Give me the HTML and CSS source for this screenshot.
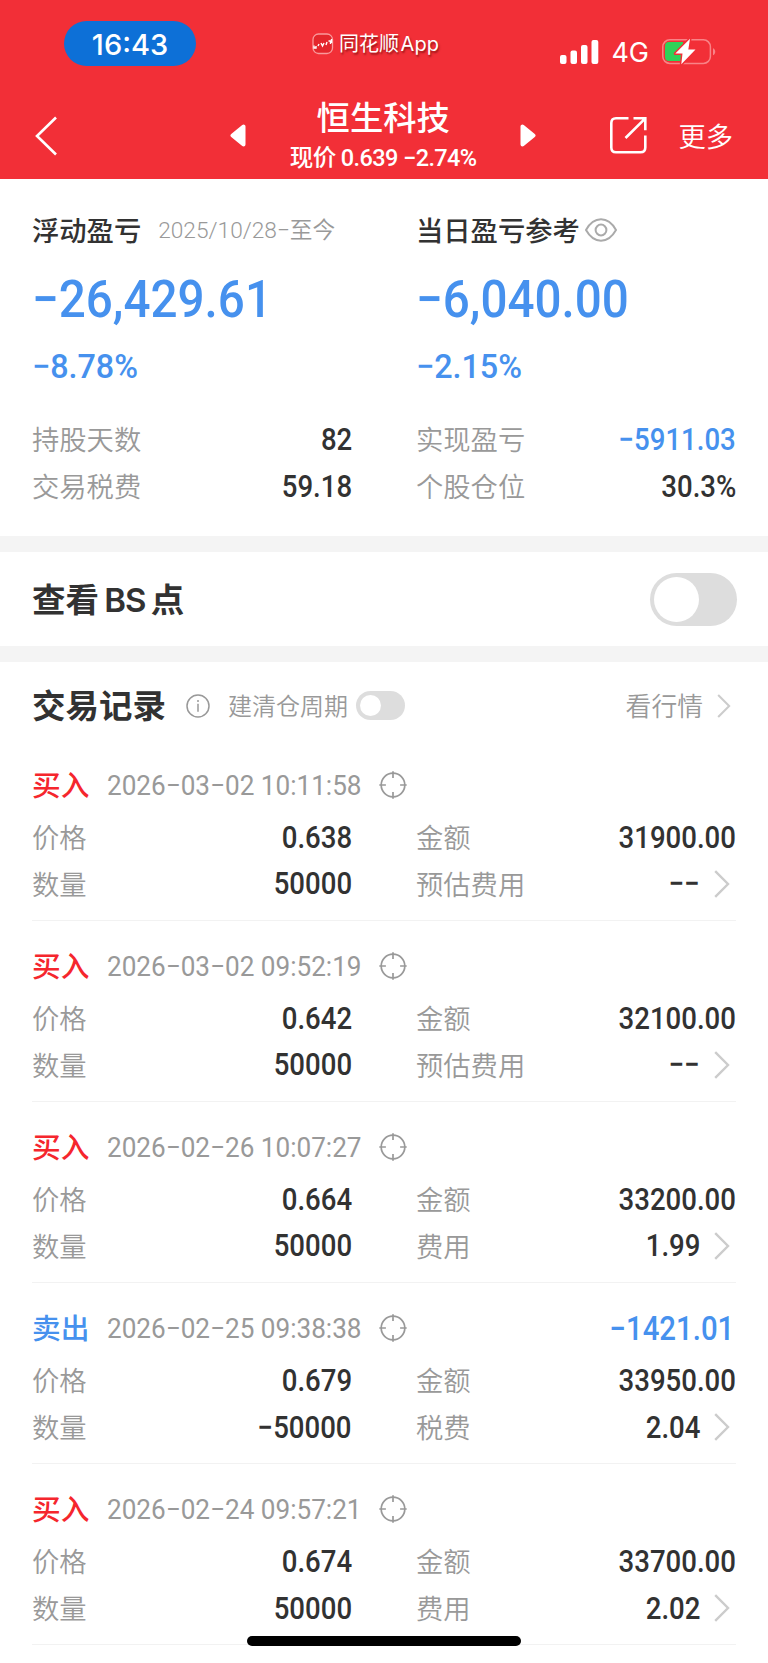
FILE: index.html
```html
<!DOCTYPE html>
<html lang="zh-CN">
<head>
  <meta charset="UTF-8" />
  <meta name="viewport" content="width=device-width, initial-scale=1" />
  <title>恒生科技</title>
  <link rel="stylesheet" href="styles.css">
</head>
<body>
  <svg class="sprite" width="0" height="0">
    <symbol id="target" viewBox="0 0 28 28">
      <circle cx="14" cy="14" r="11.8" />
      <path d="M14 0.3v6.6M14 21.1v6.6M0.3 14h6.6M21.1 14h6.6" />
    </symbol>
    <symbol id="arrow" viewBox="0 0 16 28">
      <path d="M1.2 1.2L14 14L1.2 26.8" />
    </symbol>
  </svg>

  <header class="header">
    <div class="status">
      <div class="time">16:43</div>
      <div class="app">
        <svg width="22" height="22" viewBox="0 0 22 22" fill="none">
          <rect x="1" y="1" width="19.5" height="19.5" rx="5.5" fill="#e4262c" stroke="#f9999b" stroke-width="1.3" />
          <path d="M2 12.5v2.5h2v-2M6 13l1-2M9 10l1.5 3 1.5-3M14 12l1-3M16.5 8h2v3M19.5 6v4" stroke="#fff" stroke-width="1.4" />
        </svg>
        <span>同花顺 App</span>
      </div>
      <div class="network">
        <svg width="39" height="24" viewBox="0 0 39 24" fill="#fff">
          <rect x="0" y="15" width="6.5" height="9" rx="2" />
          <rect x="10.5" y="10.5" width="6.5" height="13.5" rx="2" />
          <rect x="21" y="5" width="6.5" height="19" rx="2" />
          <rect x="31.5" y="0" width="6.8" height="24" rx="2" />
        </svg>
        <span>4G</span>
        <svg width="54" height="28" viewBox="0 0 54 28">
          <rect x="0.8" y="1.8" width="47.6" height="23.6" rx="7" fill="none" stroke="#f98387" stroke-width="1.5" />
          <path d="M51 10.3c3 1.3 3 5.7 0 7z" fill="#f98387" />
          <path d="M7 4h14v19H7q-4 0-4-4V8q0-4 4-4z" fill="#30d158" />
          <path d="M28 0.8L13.3 15.6h7.2L19.3 26.2L33.5 11.4h-7.2z" fill="#fff" stroke="#f22f37" stroke-width="3" stroke-linejoin="round" paint-order="stroke" />
        </svg>
      </div>
    </div>

    <nav class="nav">
      <svg class="back" width="23" height="40" viewBox="0 0 23 40"><path d="M21 1.5L2 20L21 38.5" /></svg>
      <svg class="prev" width="16" height="23" viewBox="0 0 16 23"><path d="M13.5 2.5v18L2.5 11.5z" /></svg>
      <div class="stock">
        <h1>恒生科技</h1>
        <p>现价 0.639 −2.74%</p>
      </div>
      <svg class="next" width="16" height="23" viewBox="0 0 16 23"><path d="M2.5 2.5v18L13.5 11.5z" /></svg>
      <svg class="share" width="37" height="37" viewBox="0 0 37 37">
        <path d="M18.5 1.3H6Q1.3 1.3 1.3 6v24.5q0 4.8 4.7 4.8h24.5q4.8 0 4.8-4.8V18.5" />
        <path d="M23.5 1.3h11.8v12M35.3 1.3L15.5 21" />
      </svg>
      <span class="more">更多</span>
    </nav>
  </header>

  <section class="summary">
    <div class="col">
      <div class="col-title">浮动盈亏 <span class="range">2025/10/28−至今</span></div>
      <div class="amount">−26,429.61</div>
      <div class="percent">−8.78%</div>
      <div class="row"><span>持股天数</span><b>82</b></div>
      <div class="row"><span>交易税费</span><b>59.18</b></div>
    </div>
    <div class="col">
      <div class="col-title">当日盈亏参考
        <svg class="eye" width="32" height="24" viewBox="0 0 32 24">
          <path d="M1 12Q7 1.3 16 1.3T31 12Q25 22.7 16 22.7T1 12z" />
          <circle cx="16" cy="12" r="5.4" />
        </svg>
      </div>
      <div class="amount">−6,040.00</div>
      <div class="percent">−2.15%</div>
      <div class="row"><span>实现盈亏</span><b class="blue">−5911.03</b></div>
      <div class="row"><span>个股仓位</span><b>30.3%</b></div>
    </div>
  </section>

  <section class="bs">
    <h2>查看 <span>BS</span> 点</h2>
    <div class="switch"></div>
  </section>

  <section class="records">
    <div class="records-head">
      <h2>交易记录</h2>
      <svg class="info" width="24" height="24" viewBox="0 0 24 24">
        <circle cx="12" cy="12" r="11" />
        <path d="M12 9.8v8M12 6v2" />
      </svg>
      <span class="cycle">建清仓周期</span>
      <div class="switch small"></div>
      <span class="quote">看行情</span>
      <svg class="arrow quote-arrow"><use href="#arrow" /></svg>
    </div>

    <div class="record">
      <div class="record-head">
        <span class="tag">买入</span><span class="date">2026−03−02 10:11:58</span>
        <svg class="target"><use href="#target" /></svg>
      </div>
      <div class="grid">
        <div class="row"><span>价格</span><b>0.638</b></div>
        <div class="row"><span>金额</span><b>31900.00</b></div>
        <div class="row"><span>数量</span><b>50000</b></div>
        <div class="row"><span>预估费用</span><b>−−</b><svg class="arrow"><use href="#arrow" /></svg></div>
      </div>
    </div>

    <div class="record">
      <div class="record-head">
        <span class="tag">买入</span><span class="date">2026−03−02 09:52:19</span>
        <svg class="target"><use href="#target" /></svg>
      </div>
      <div class="grid">
        <div class="row"><span>价格</span><b>0.642</b></div>
        <div class="row"><span>金额</span><b>32100.00</b></div>
        <div class="row"><span>数量</span><b>50000</b></div>
        <div class="row"><span>预估费用</span><b>−−</b><svg class="arrow"><use href="#arrow" /></svg></div>
      </div>
    </div>

    <div class="record">
      <div class="record-head">
        <span class="tag">买入</span><span class="date">2026−02−26 10:07:27</span>
        <svg class="target"><use href="#target" /></svg>
      </div>
      <div class="grid">
        <div class="row"><span>价格</span><b>0.664</b></div>
        <div class="row"><span>金额</span><b>33200.00</b></div>
        <div class="row"><span>数量</span><b>50000</b></div>
        <div class="row"><span>费用</span><b>1.99</b><svg class="arrow"><use href="#arrow" /></svg></div>
      </div>
    </div>

    <div class="record">
      <div class="record-head">
        <span class="tag sell">卖出</span><span class="date">2026−02−25 09:38:38</span>
        <svg class="target"><use href="#target" /></svg>
        <span class="profit">−1421.01</span>
      </div>
      <div class="grid">
        <div class="row"><span>价格</span><b>0.679</b></div>
        <div class="row"><span>金额</span><b>33950.00</b></div>
        <div class="row"><span>数量</span><b>−50000</b></div>
        <div class="row"><span>税费</span><b>2.04</b><svg class="arrow"><use href="#arrow" /></svg></div>
      </div>
    </div>

    <div class="record">
      <div class="record-head">
        <span class="tag">买入</span><span class="date">2026−02−24 09:57:21</span>
        <svg class="target"><use href="#target" /></svg>
      </div>
      <div class="grid">
        <div class="row"><span>价格</span><b>0.674</b></div>
        <div class="row"><span>金额</span><b>33700.00</b></div>
        <div class="row"><span>数量</span><b>50000</b></div>
        <div class="row"><span>费用</span><b>2.02</b><svg class="arrow"><use href="#arrow" /></svg></div>
      </div>
    </div>
  </section>

  <div class="home-bar"></div>
</body>
</html>
```
FILE: styles.css
```css
* {
  box-sizing: border-box;
}
body {
  margin: 0;
  position: relative;
  height: 1663px;
  overflow: hidden;
  background: #fff;
  color: #323232;
  font-family: Roboto, "Noto Sans CJK SC", sans-serif;
}
h1, h2, p {
  margin: 0;
}
svg {
  flex: none;
  display: block;
}
.sprite {
  position: absolute;
}

/* header */
.header {
  height: 179px;
  background: #f22f37;
  color: #fff;
}
.status {
  display: flex;
  height: 92px;
  padding: 21px 52px 0 64px;
}
.time {
  width: 132px;
  height: 45px;
  border-radius: 23px;
  background: #0d70d7;
  font: 450 29px/47px Inter, sans-serif;
  text-align: center;
}
.app {
  display: flex;
  align-items: center;
  gap: 5px;
  height: 45px;
  margin-left: 116px;
  font: 400 20px/47px Inter, "Noto Sans CJK SC", sans-serif;
  word-spacing: -4px;
  text-shadow: 1px 2px 2px rgba(90, 0, 0, .6);
}
.app span {
  padding-top: 2px;
}
.network {
  display: flex;
  align-items: center;
  height: 61px;
  margin-left: auto;
  font: 400 27px/63px Inter, sans-serif;
}
.network span {
  margin: 2px 13px 0 12px;
}
.nav {
  display: flex;
  align-items: center;
  height: 87px;
  padding: 0 35px;
}
.nav svg {
  fill: none;
  stroke: #fff;
  stroke-width: 2.6;
}
.nav .prev,
.nav .next {
  fill: #fff;
  stroke-width: 4;
  stroke-linejoin: round;
}
.prev {
  margin-left: 172px;
}
.stock {
  width: 276px;
  margin: 2px 0 0 1px;
  text-align: center;
}
.stock h1 {
  font-size: 33.3px;
  font-weight: 500;
  line-height: 44px;
}
.stock p {
  font-size: 23.5px;
  font-weight: 500;
  line-height: 35px;
  letter-spacing: -.6px;
}
.next {
  margin-left: 1px;
}
.share {
  margin-left: 74px;
}
.more {
  margin: -2px 0 0 31px;
  font-size: 27.3px;
  font-weight: 350;
  white-space: nowrap;
}

/* summary */
.summary {
  display: grid;
  grid-template-columns: 320px 320px;
  gap: 64px;
  height: 357px;
  padding: 30px 32px 0;
}
.col-title {
  display: flex;
  align-items: center;
  height: 40px;
  font-size: 27.3px;
  font-weight: 500;
  white-space: nowrap;
}
.range {
  margin-left: 17px;
  padding-bottom: 1px;
  color: #999;
  font-size: 22.7px;
  font-weight: 350;
}
.eye {
  margin: 1px 0 0 5px;
  fill: none;
  stroke: #aaa;
  stroke-width: 2;
}
/* narrow figures */
.amount,
.percent,
.date,
.profit,
.row b {
  transform: scaleX(.89);
  transform-origin: right;
}
.amount {
  height: 60px;
  margin-top: 21px;
  color: #4691ee;
  font-size: 52px;
  font-weight: 500;
  line-height: 60px;
  transform: scaleX(.915);
  transform-origin: left;
}
.percent {
  height: 40px;
  margin: 16px 0 30px;
  color: #4691ee;
  font-size: 34px;
  font-weight: 500;
  line-height: 40px;
  transform: scaleX(.95);
  transform-origin: left;
}
.row {
  display: flex;
  align-items: center;
  height: 46.7px;
  color: #999;
  font-size: 27.3px;
  font-weight: 350;
}
.row span {
  padding-bottom: 2px;
}
.row b {
  margin-left: auto;
  color: #323232;
  font-size: 31px;
  font-weight: 500;
}
.row .blue {
  color: #4691ee;
}

/* switches */
.bs {
  display: flex;
  align-items: center;
  justify-content: space-between;
  height: 126px;
  padding: 0 31px 0 32px;
  border: solid #f4f4f4;
  border-width: 16px 0;
}
h2 {
  padding-top: 2px;
  font-size: 33.5px;
  font-weight: 700;
  line-height: 44px;
}
.bs h2 {
  word-spacing: -3px;
}
.bs span {
  font-family: Inter, sans-serif;
  font-size: 33px;
  font-weight: 600;
  letter-spacing: -1px;
}
.switch {
  width: 87px;
  height: 53px;
  padding: 4px;
  border-radius: 27px;
  background: #ddd;
}
.switch::before {
  content: "";
  display: block;
  width: 45px;
  height: 45px;
  border-radius: 50%;
  background: #fff;
}
.small {
  width: 49px;
  height: 29px;
}
.small::before {
  width: 21px;
  height: 21px;
}

/* records */
.records {
  padding: 0 32px;
}
.records-head {
  display: flex;
  align-items: center;
  height: 78px;
  padding-top: 9px;
  color: #999;
  font-weight: 350;
}
.records-head h2 {
  color: #323232;
}
.info {
  margin: 0 18px 0 20px;
  fill: none;
  stroke: #999;
  stroke-width: 1.5;
}
.cycle {
  margin-right: 8px;
  padding-bottom: 2px;
  font-size: 24px;
}
.quote {
  margin-left: auto;
  padding-bottom: 2px;
  font-size: 25.8px;
}
.record {
  height: 181.1px;
  padding-top: 25px;
  border-bottom: 1px solid #f2f2f2;
}
.record-head {
  display: flex;
  align-items: center;
  height: 40px;
}
.tag {
  width: 75px;
  padding-bottom: 3px;
  color: #f5262d;
  font-size: 28.7px;
  font-weight: 500;
}
.sell {
  color: #4691ee;
}
.date {
  width: 272px;
  color: #999;
  font-size: 28px;
  white-space: nowrap;
  transform: scaleX(.933);
  transform-origin: left;
}
.target {
  width: 28px;
  height: 28px;
  fill: none;
  stroke: #999;
  stroke-width: 1.7;
}
.profit {
  margin: 0 2px 0 auto;
  color: #4691ee;
  font-size: 33px;
  font-weight: 500;
}
.grid {
  display: grid;
  grid-template-columns: 320px 320px;
  column-gap: 64px;
  margin-top: 8.7px;
}
.arrow {
  width: 16px;
  height: 28px;
  margin: 0 6px 0 14px;
  fill: none;
  stroke: #ccc;
  stroke-width: 2.4;
}
.quote-arrow {
  width: 14px;
  height: 24px;
  margin: 0 5px 0 14px;
}

.home-bar {
  position: absolute;
  left: 247px;
  top: 1636px;
  width: 274px;
  height: 10px;
  border-radius: 5px;
  background: #000;
}
```
